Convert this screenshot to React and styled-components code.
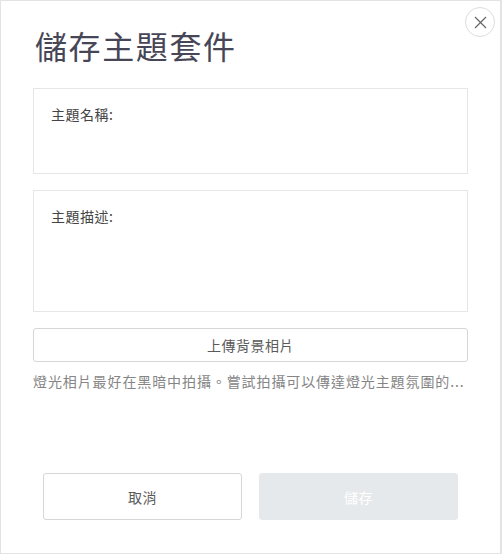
import React from "react";
import styled, { createGlobalStyle } from "styled-components";

const Global = createGlobalStyle`
  html, body { margin: 0; padding: 0; background: #fff; }
  body { font-family: "Noto Sans CJK TC", "Noto Sans", sans-serif; }
  * { box-sizing: border-box; }
`;

const Dialog = styled.div`
  position: relative;
  width: 502px;
  height: 554px;
  border: 1px solid #e3e3e3;
  border-right-width: 2px;
  background: #fff;
  padding: 24px 32px 0 32px;
  display: flex;
  flex-direction: column;
`;

const Close = styled.button`
  position: absolute;
  top: 6px;
  right: 5px;
  width: 30px;
  height: 30px;
  border-radius: 50%;
  border: 1px solid #dcdcdc;
  background: #fff;
  display: flex;
  align-items: center;
  justify-content: center;
  padding: 0;
  cursor: pointer;
`;

const Title = styled.h1`
  margin: 0 0 0 2px;
  font-size: 32px;
  line-height: 40px;
  font-weight: 400;
  color: #474656;
  letter-spacing: 1.6px;
`;

const Field = styled.div`
  margin-top: ${({ top }) => top}px;
  height: ${({ h }) => h}px;
  border: 1px solid #e6e6e6;
  padding: 15px 17px;
  font-size: 14px;
  line-height: 20px;
  letter-spacing: 0.5px;
  color: #444;
`;

const Upload = styled.button`
  margin-top: 16px;
  height: 34px;
  width: 100%;
  border: 1px solid #d6d6d6;
  border-radius: 3px;
  background: #fff;
  font-family: inherit;
  font-size: 14px;
  letter-spacing: 0.5px;
  color: #5a5a5a;
  cursor: pointer;
`;

const Hint = styled.p`
  margin: 9px 0 0;
  font-size: 14px;
  line-height: 20px;
  letter-spacing: 0.9px;
  color: #858585;
  white-space: nowrap;
`;

const Footer = styled.div`
  margin-top: auto;
  margin-bottom: 33px;
  padding: 0 10px;
  display: grid;
  grid-template-columns: 1fr 1fr;
  gap: 17px;
`;

const Action = styled.button`
  height: 47px;
  border-radius: 3px;
  font-family: inherit;
  font-size: 14px;
  letter-spacing: 0.5px;
  border: 1px solid ${({ primary }) => (primary ? "#e6e9ec" : "#d6d6d6")};
  background: ${({ primary }) => (primary ? "#e6e9ec" : "#fff")};
  color: ${({ primary }) => (primary ? "#fff" : "#5a5a5a")};
  cursor: pointer;
`;

export default function App() {
  return (
    <>
      <Global />
      <Dialog>
        <Close aria-label="close">
          <svg width="13" height="13" viewBox="0 0 13 13">
            <path d="M1 1L12 12M12 1L1 12" stroke="#666" strokeWidth="1.2" fill="none" />
          </svg>
        </Close>
        <Title>儲存主題套件</Title>
        <Field top={23} h={86}>主題名稱:</Field>
        <Field top={16} h={122}>主題描述:</Field>
        <Upload>上傳背景相片</Upload>
        <Hint>燈光相片最好在黑暗中拍攝。嘗試拍攝可以傳達燈光主題氛圍的...</Hint>
        <Footer>
          <Action>取消</Action>
          <Action primary>儲存</Action>
        </Footer>
      </Dialog>
    </>
  );
}
